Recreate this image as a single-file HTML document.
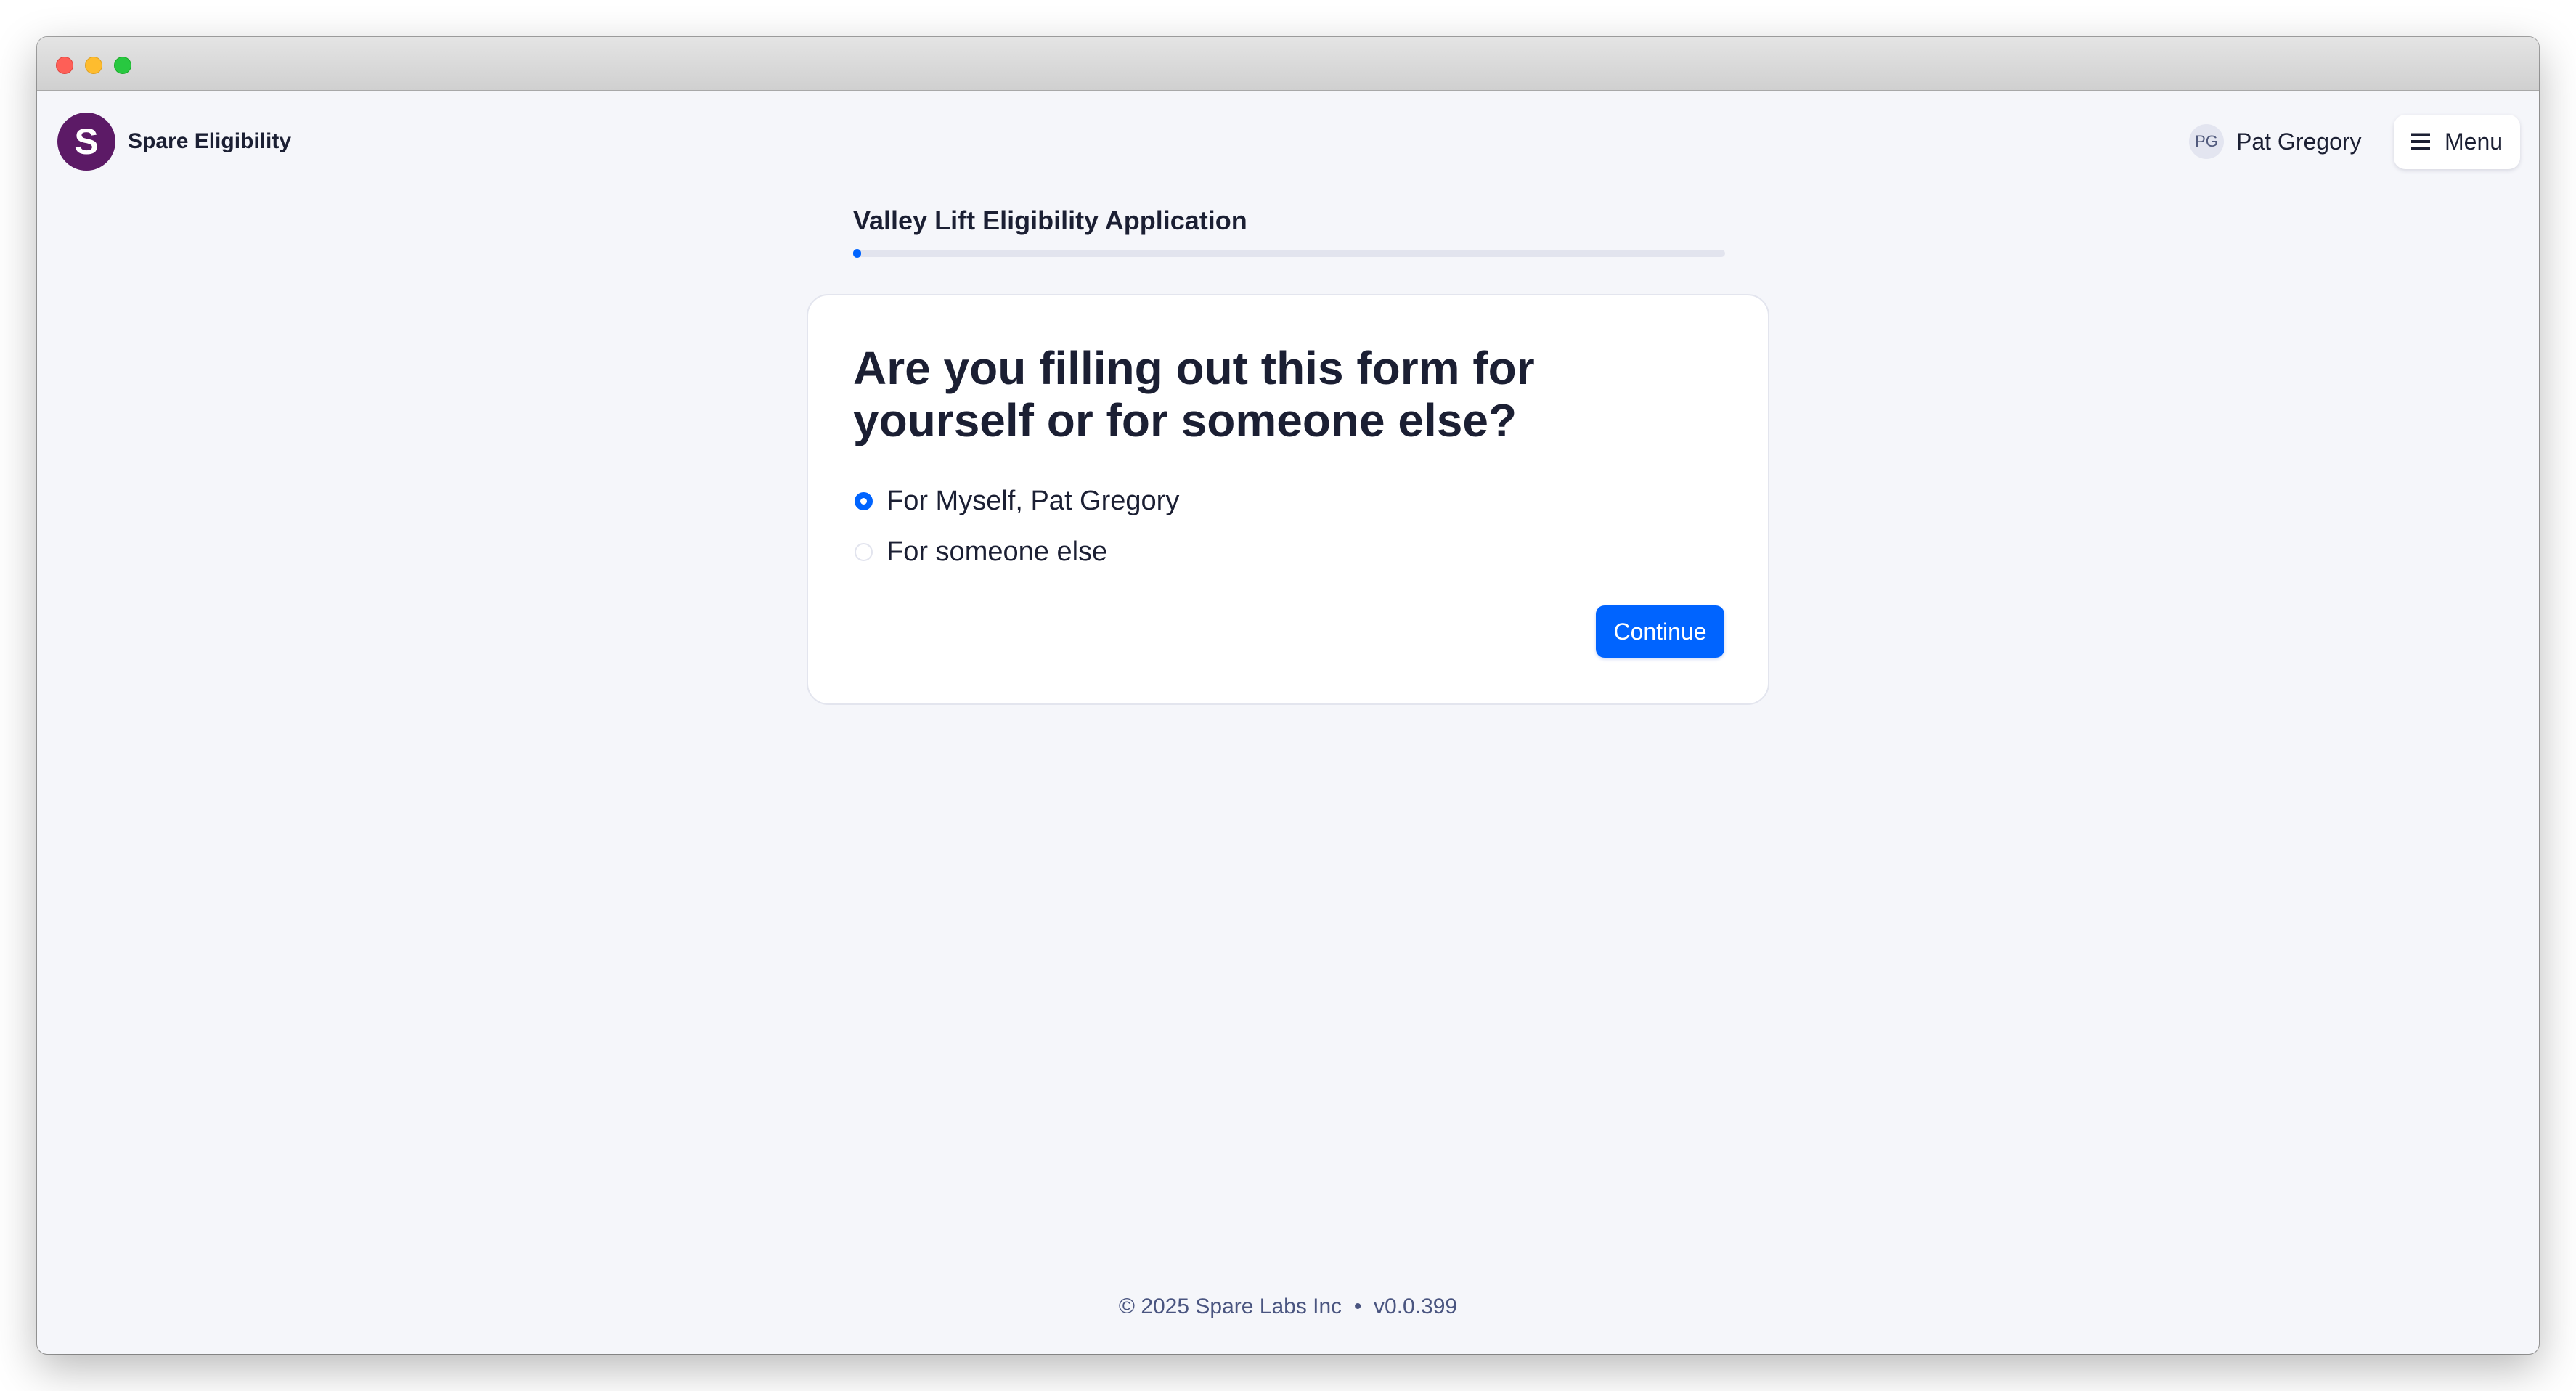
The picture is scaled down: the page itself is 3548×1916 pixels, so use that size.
<!DOCTYPE html>
<html><head><meta charset="utf-8"><style>
*{margin:0;padding:0;box-sizing:border-box}
html,body{width:3548px;height:1916px;background:#fff;font-family:"Liberation Sans",sans-serif;overflow:hidden;position:relative}
.win{position:absolute;left:51px;top:51px;width:3446px;height:1814px;border-radius:14px;background:#f5f6fa;overflow:hidden;box-shadow:0 20px 60px rgba(0,0,0,.28),0 0 0 1px rgba(0,0,0,.35)}
.bar{position:absolute;left:0;top:0;width:100%;height:75px;background:linear-gradient(#e4e4e4,#d0d0d0);border-bottom:2px solid #a8a8a8}
.dot{position:absolute;top:27px;width:24px;height:24px;border-radius:50%}
.abs{position:absolute;white-space:nowrap}
</style></head><body>
<div class="win">
<div class="bar">
<div class="dot" style="left:26px;background:#fe5f57;border:1px solid #e0443e"></div>
<div class="dot" style="left:66px;background:#febc2e;border:1px solid #dea123"></div>
<div class="dot" style="left:106px;background:#28c840;border:1px solid #1aab29"></div>
</div>
<div class="abs" style="left:28px;top:104px;width:80px;height:80px;border-radius:50%;background:#5c1a66;color:#fff;font-weight:bold;font-size:50px;text-align:center;line-height:80px">S</div>
<div class="abs" style="left:125px;top:124px;font-size:30px;font-weight:bold;color:#1b1f33;line-height:40px">Spare Eligibility</div>
<div class="abs" style="left:2964px;top:120px;width:48px;height:48px;border-radius:50%;background:#e3e5f0;color:#50597c;font-size:22px;text-align:center;line-height:48px">PG</div>
<div class="abs" style="left:3029px;top:124px;font-size:32px;color:#1b1f33;line-height:40px">Pat Gregory</div>
<div class="abs" style="left:3246px;top:107px;width:174px;height:75px;border-radius:16px;background:#fff;box-shadow:0 2px 6px rgba(40,40,80,.15)">
<svg style="position:absolute;left:24px;top:25px" width="26" height="24" viewBox="0 0 26 24"><path d="M0 2.5H26M0 12H26M0 21.5H26" stroke="#1b1f33" stroke-width="4"/></svg>
<div class="abs" style="left:70px;top:16px;font-size:32px;color:#1b1f33;line-height:42px">Menu</div>
</div>
<div class="abs" style="left:1124px;top:232px;font-size:36px;font-weight:bold;color:#1b1f33;line-height:42px">Valley Lift Eligibility Application</div>
<div class="abs" style="left:1124px;top:293px;width:1201px;height:10px;border-radius:5px;background:#e2e4ee"><div style="width:11px;height:12px;margin-top:-1px;border-radius:6px;background:#0064ff"></div></div>
<div class="abs" style="left:1060px;top:354px;width:1326px;height:566px;background:#fff;border:2px solid #e3e5ee;border-radius:30px">
<div class="abs" style="left:62px;top:64px;font-size:64px;font-weight:bold;color:#1b1f33;line-height:72px">Are you filling out this form for<br>yourself or for someone else?</div>
<div class="abs" style="left:64px;top:271px;width:25px;height:25px;border-radius:50%;border:8px solid #0064ff;background:#fff"></div>
<div class="abs" style="left:108px;top:261px;font-size:38px;color:#1b1f33;line-height:44px">For Myself, Pat Gregory</div>
<div class="abs" style="left:64px;top:341px;width:25px;height:25px;border-radius:50%;border:2px solid #e2e4ee;background:#fff"></div>
<div class="abs" style="left:108px;top:331px;font-size:38px;color:#1b1f33;line-height:44px">For someone else</div>
<div class="abs" style="left:1085px;top:427px;width:177px;height:72px;border-radius:12px;background:#0064ff;color:#fff;font-size:32px;text-align:center;line-height:72px;box-shadow:0 2px 5px rgba(0,60,200,.2)">Continue</div>
</div>
<div class="abs" style="left:0;width:100%;top:1731px;text-align:center;font-size:30px;color:#4a5580;line-height:36px">© 2025 Spare Labs Inc &nbsp;•&nbsp; v0.0.399</div>
</div>
</body></html>
